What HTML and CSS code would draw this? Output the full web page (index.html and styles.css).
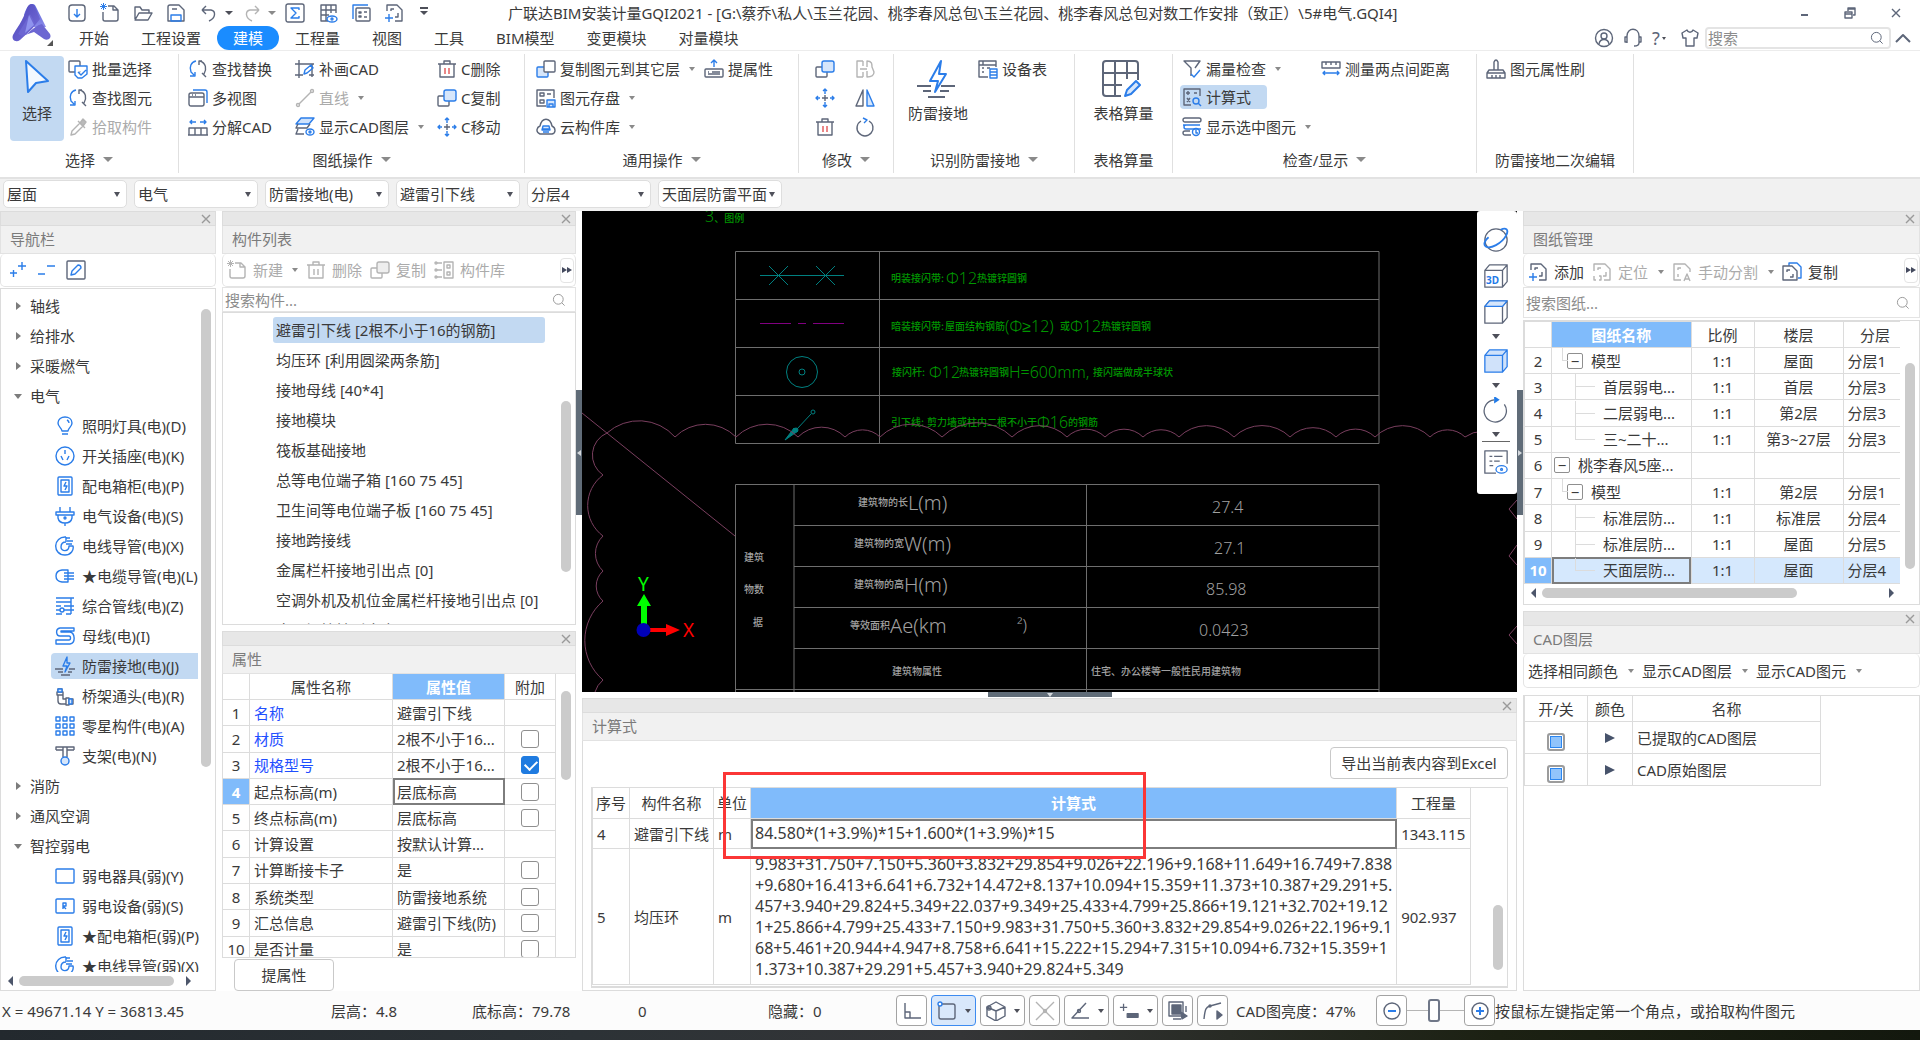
FILE: index.html
```html
<!DOCTYPE html>
<html lang="zh-CN">
<head>
<meta charset="utf-8">
<title>广联达BIM安装计量GQI2021</title>
<link rel="stylesheet" href="styles.css">
</head>
<body>
<svg class="defs" aria-hidden="true">
  <defs>
    <linearGradient id="logoA" x1="0" y1="0" x2="0" y2="1"><stop offset="0" stop-color="#5a62d8"/><stop offset="1" stop-color="#8a8ae8"/></linearGradient>
    <linearGradient id="logoB" x1="0" y1="0" x2="1" y2="1"><stop offset="0" stop-color="#4a44b8"/><stop offset="1" stop-color="#7a72dc"/></linearGradient>
  </defs>
  <symbol id="i-down" viewBox="0 0 20 20"><rect x="2" y="2" width="16" height="16" rx="3"/><path class="b" d="M10 6v8M7 11l3 3 3-3"/></symbol>
  <symbol id="i-new" viewBox="0 0 20 20"><path d="M8 3h6l4 4v9a2 2 0 0 1-2 2H5a2 2 0 0 1-2-2V9M13 3v4h5"/><path class="b" stroke-width="1" d="M1 1l5 5M6 1L1 6M3.500 0v7M0 3.500h7"/></symbol>
  <symbol id="i-open" viewBox="0 0 20 20"><path d="M2 16V4h5l2 3h7v3M2 17l4-7h13l-4 7z"/></symbol>
  <symbol id="i-save" viewBox="0 0 20 20"><path d="M2 18V4a2 2 0 0 1 2-2h9l5 5v11zM6 6h5"/><path class="b" d="M5 18v-6h10v6z"/></symbol>
  <symbol id="i-undo" viewBox="0 0 20 20"><path d="M3 7h9c5 1 5 8-2 11M3 7l4-4M3 7l4 4"/></symbol>
  <symbol id="i-redo" viewBox="0 0 20 20"><path d="M17 7H8c-5 1-5 8 2 11M17 7l-4-4M17 7l-4 4"/></symbol>
  <symbol id="i-sum" viewBox="0 0 20 20"><rect x="1" y="1" width="18" height="18" rx="2"/><path class="b" d="M14 7V5H6l5 5-5 5h8v-2"/></symbol>
  <symbol id="i-grideye" viewBox="0 0 20 20"><path d="M10 18H3V2h15v8M3 7h15M3 12h8M8 2v16M13 2v8"/><ellipse class="b" cx="14" cy="16" rx="5" ry="3"/><circle class="b" cx="14" cy="16" r="1"/></symbol>
  <symbol id="i-list" viewBox="0 0 20 20"><path class="b" d="M2 16V2h15"/><rect x="5" y="5" width="14" height="13" rx="1"/><path d="M8 9h2v1H8zM8 13h2v1H8zM13 9h3M13 14h3"/></symbol>
  <symbol id="i-addpage" viewBox="0 0 20 20"><path d="M3 8V2h10l5 5v11h-7M7 8V6h3M14 10v4h-3"/><path class="b" d="M1 15h8M5 11v8"/></symbol>
  <symbol id="i-cursor" viewBox="0 0 30 36"><path class="b" fill="#f3f8fe" d="M4 3l22 20-12 2-8 9z" stroke-width="2"/></symbol>
  <symbol id="i-batch" viewBox="0 0 20 20"><rect x="1" y="2" width="11" height="11" rx="1"/><path class="b" fill="#fff" d="M7 7h12v8l-5 4h-4l-3-3zM10 13l3 3 5-5"/></symbol>
  <symbol id="i-find" viewBox="0 0 20 20"><path class="b" d="M8 2C3 3 1 8 3 13l3 3M2 17h5v-4"/><path d="M12 2c6 2 7 8 4 13M11 6V2h3M14 14l4 4"/></symbol>
  <symbol id="i-pick" viewBox="0 0 20 20"><path d="M3 18l1-4 8-8 3 3-8 8zM10 4l7 7"/><path d="M12 6l3-4 3 3-3 4z" fill="#bbb"/></symbol>
  <symbol id="i-views" viewBox="0 0 20 20"><path class="b" d="M5 2h12a2 2 0 0 1 2 2v11"/><rect x="1" y="5" width="15" height="13" rx="2"/><path d="M1 9h15M4 7h1M7 7h1"/></symbol>
  <symbol id="i-split" viewBox="0 0 20 20"><path d="M1 18v-7h18v7M0 18h20M7 11v7M13 11v7"/><path class="b" d="M2 5h6M12 5h6M4 3L2 5l2 2M16 3l2 2-2 2"/></symbol>
  <symbol id="i-draw" viewBox="0 0 20 20"><path d="M0 5h19M4 1v18M0 16h8M17 5v13M14 16h5"/><path class="b" d="M9 15l1-4 6-5 2 3-6 5z"/></symbol>
  <symbol id="i-line" viewBox="0 0 20 20"><path d="M4 16L16 4"/><circle cx="3" cy="17" r="1.500"/><circle cx="17" cy="3" r="1.500"/></symbol>
  <symbol id="i-layers" viewBox="0 0 20 20"><path class="b" fill="#cfe2fb" d="M6 1h13l-5 6H1z"/><path d="M3 7l-2 4h11l3-4M3 12l-2 5h8"/><ellipse class="b" cx="15" cy="15" rx="4" ry="3"/><circle class="b" cx="15" cy="15" r="1"/></symbol>
  <symbol id="i-trash" viewBox="0 0 20 20"><path d="M1 5h18M7 5V2h6v3M3 5v13h14V5"/><path class="r" d="M8 9v6M12 9v6"/></symbol>
  <symbol id="i-copy" viewBox="0 0 20 20"><rect x="1" y="8" width="11" height="10" rx="1"/><rect class="b f" x="7" y="2" width="12" height="11" rx="2"/></symbol>
  <symbol id="i-move" viewBox="0 0 20 20"><path class="b" d="M10 1v5M10 14v5M1 10h4M15 10h4M8 3l2-2 2 2M8 17l2 2 2-2M3 8l-2 2 2 2M17 8l2 2-2 2"/><path d="M7 10h6M10 7v6"/></symbol>
  <symbol id="i-copyf" viewBox="0 0 20 20"><rect class="b f" x="1" y="8" width="11" height="10" rx="1"/><rect x="8" y="2" width="11" height="11" rx="1" fill="#fff"/></symbol>
  <symbol id="i-store" viewBox="0 0 20 20"><path d="M10 18H1V2h17v8M4 5h4v3H4zM4 12h4v3H4zM11 6h4"/><path class="b f" d="M11 12h8v7h-8zM13 19v-3h4v3"/></symbol>
  <symbol id="i-cloud" viewBox="0 0 20 20"><path d="M4 17c-5-2-3-7 0-8 2-9 10-9 12 0 4 2 4 7 0 8z"/><path class="b f" d="M6 13l1-4h6l1 4zM7 15h6M6 12h8"/></symbol>
  <symbol id="i-lift" viewBox="0 0 20 20"><rect x="1" y="10" width="18" height="8" rx="1"/><path d="M4 13h1M8 13h8M4 15h12"/><path class="b" d="M10 8V1M7 4l3-3 3 3"/></symbol>
  <symbol id="i-join" viewBox="0 0 20 20"><path d="M8 2H2v16h6M8 2v5M8 13v5M5 10h7M12 8V2c5 0 5 3 5 6l2 5c0 4-3 5-7 5v-6"/></symbol>
  <symbol id="i-mirror" viewBox="0 0 20 20"><path d="M8 2v16H1z"/><path class="b f" d="M12 2v16h7z"/></symbol>
  <symbol id="i-rotate" viewBox="0 0 20 20"><path d="M14 4a8 8 0 1 1-8 0"/><path class="b" d="M8 1l4 2-3 3"/></symbol>
  <symbol id="i-bolt" viewBox="0 0 40 40"><path class="b" d="M25 2L14 22h8l-3 11 11-18h-7z" stroke-width="2"/><path d="M1 27h14M25 27h14M7 32h8M24 32h9M12 38h17" stroke-width="2"/></symbol>
  <symbol id="i-devtab" viewBox="0 0 20 20"><path d="M10 18H1V2h17v6M1 6h17M5 2v4M4 9h2M9 9h3M4 13h2"/><path class="b" d="M12 10h7v9h-7zM12 13h7M12 16h7"/></symbol>
  <symbol id="i-table" viewBox="0 0 40 40"><path d="M20 37H5a3 3 0 0 1-3-3V5a3 3 0 0 1 3-3h29a3 3 0 0 1 3 3v16M2 14h35M2 26h19M14 2v35M26 2v18" stroke-width="2"/><path class="b f" d="M24 37l2-6 9-9 4 4-9 9z" stroke-width="2"/></symbol>
  <symbol id="i-funnel" viewBox="0 0 20 20"><path d="M9 17V9L2 2h16l-5 7"/><path class="b" d="M9 15l3 3 6-7"/></symbol>
  <symbol id="i-formula" viewBox="0 0 20 20"><path d="M9 18H2V2h16v7M4 6h4M6 4v4M12 6h3M5 11l3 4M8 11l-3 4"/><circle class="b" cx="14" cy="14" r="3"/><path class="b" d="M16 16l3 3"/></symbol>
  <symbol id="i-showsel" viewBox="0 0 20 20"><rect x="1" y="1" width="18" height="4" rx="2"/><path class="b" d="M1 8h17M19 12H4a2 2 0 0 1 0-4"/><path d="M9 18H3a2 2 0 0 1 0-4h5"/><circle class="b" cx="14" cy="15" r="3.500"/><path class="b" d="M14 13v3h2"/></symbol>
  <symbol id="i-ruler" viewBox="0 0 20 20"><path d="M1 9V3h18v6zM5 3v3M10 3v3M15 3v3"/><path class="b" d="M2 14h16M4 12l-2 2 2 2M16 12l2 2-2 2"/></symbol>
  <symbol id="i-brush" viewBox="0 0 20 20"><path d="M1 19v-5l2-3h14l2 3v5zM1 14h18M8 11V3q2-4 4 0v8M6 16v3M10 16v3M14 16v3"/></symbol>
  <symbol id="i-user" viewBox="0 0 20 20"><circle cx="10" cy="10" r="8.500"/><circle cx="10" cy="8" r="3"/><path d="M5 16c1-6 9-6 10 0"/></symbol>
  <symbol id="i-head" viewBox="0 0 20 20"><path d="M4 15V8c0-9 12-9 12 0v7M4 9H2v5h2M16 9h2v5h-2M16 15c0 3-3 3-5 3"/></symbol>
  <symbol id="i-shirt" viewBox="0 0 20 20"><path d="M7 2L2 5l1 5h3v8h8v-8h3l1-5-5-3c-1 3-5 3-6 0z"/></symbol>
  <symbol id="i-mag" viewBox="0 0 20 20"><circle cx="9" cy="9" r="7"/><path d="M14 14l4 4"/></symbol>
  <symbol id="i-x" viewBox="0 0 12 12"><path d="M2 2l8 8M10 2l-8 8"/></symbol>
  <symbol id="i-pp" viewBox="0 0 20 20"><path class="b" d="M2 13h7M5.500 10v7M10 6h8M14 2v8"/></symbol>
  <symbol id="i-mm" viewBox="0 0 20 20"><path class="b" d="M1 14h7M10 6h8"/></symbol>
  <symbol id="i-edit" viewBox="0 0 20 20"><rect x="1" y="1" width="18" height="18" rx="1"/><path class="b" d="M5 15l1-4 6-6q3 0 3 3l-6 6z"/></symbol>
  <symbol id="i-lib" viewBox="0 0 20 20"><path d="M10 2h9v16h-9zM13 5h3v3h-3zM13 12h3v3h-3zM3 3h5M3 10h5M3 17h5"/><circle cx="2" cy="3" r="1"/><circle cx="2" cy="10" r="1"/><circle cx="2" cy="17" r="1"/></symbol>
  <symbol id="i-bulb" viewBox="0 0 20 20"><path class="b" d="M7 15c0-3-4-4-4-8 0-8 14-8 14 0 0 4-4 5-4 8zM7 18h6M12 4q2 1 2 3"/></symbol>
  <symbol id="i-socket" viewBox="0 0 20 20"><circle class="b" cx="10" cy="10" r="9"/><path class="b" d="M10 4v4M6 10l2 4M14 10l-2 4"/></symbol>
  <symbol id="i-box" viewBox="0 0 20 20"><rect class="b" x="3" y="1" width="14" height="18" rx="1"/><rect class="b" x="6" y="4" width="8" height="12"/><path class="b" d="M11 6l-2 4h3l-2 4"/></symbol>
  <symbol id="i-plug" viewBox="0 0 20 20"><path class="b" d="M1 6h18v3H1zM5 1v5M15 1v5M3 9v3q1 5 7 5t7-5V9M10 17v3"/><circle class="b" cx="10" cy="12" r="1"/></symbol>
  <symbol id="i-wire" viewBox="0 0 20 20"><path class="b" d="M11 1C-2 0-3 19 10 19c6 0 9-5 8-9h-4c0 6-8 6-8 1 0-3 2-5 5-5M11 1v5M11 2h4M12 5h6M11 8h6"/></symbol>
  <symbol id="i-cable" viewBox="0 0 20 20"><path class="b" d="M13 4H7C-1 5-1 15 7 16h6zM9 7h10M9 10h10M9 13h10"/></symbol>
  <symbol id="i-pipes" viewBox="0 0 20 20"><path class="b" d="M1 2h18M1 6h15M1 14h4M9 14h10M1 18h6M11 18h5M16 2v16M9 10h10M1 10h5"/><circle class="b" cx="7" cy="14" r="2"/></symbol>
  <symbol id="i-bus" viewBox="0 0 20 20"><path class="b" d="M19 2H5c-5 1-4 8 0 8h9c2 0 2 4 0 4H1v4h14c6-1 5-11 0-12H6V5h13z"/></symbol>
  <symbol id="i-sbolt" viewBox="0 0 20 20"><path class="b" d="M12 1L8 10h4l-2 6 5-9h-3z"/><path d="M0 13h8M14 13h6M3 16h5M13 16h4M6 19h9"/></symbol>
  <symbol id="i-tray" viewBox="0 0 20 20"><path d="M2 6h6v3H2zM3 6V3h4v3M3 9v6q0 3 3 3h5V13H8V9M11 12h3v7h-3zM14 13h4v5h-4"/><path class="b f" d="M3 3h4v3H3zM14 13h3v5h-3z"/></symbol>
  <symbol id="i-nine" viewBox="0 0 20 20"><path class="b" d="M1 1h4v4H1zM8 1h4v4H8zM15 1h4v4h-4zM1 8h4v4H1zM8 8h4v4H8zM15 8h4v4h-4zM1 15h4v4H1zM8 15h4v4H8zM15 15h4v4h-4z"/></symbol>
  <symbol id="i-support" viewBox="0 0 20 20"><path d="M1 4V1h18v3M8 1v10M12 1v10M1 4h7M12 4h7"/><circle class="b f" cx="10" cy="15" r="4"/></symbol>
  <symbol id="i-rect" viewBox="0 0 20 20"><rect class="b" x="1" y="3" width="18" height="14" rx="1"/></symbol>
  <symbol id="i-rectr" viewBox="0 0 20 20"><rect class="b" x="1" y="3" width="18" height="14" rx="1"/><path class="b" d="M8 13V7h3v3H8l3 3"/></symbol>
  <symbol id="i-planet" viewBox="0 0 28 28"><circle cx="14" cy="14" r="12"/><path class="b" d="M19 3c6-3 9 0 6 6-5 9-17 15-22 12-3-2-1-7 3-10" stroke-width="2"/></symbol>
  <symbol id="i-cube" viewBox="0 0 28 28"><path d="M2 8h19v18H2zM2 8l5-6h19l-5 6zM26 2v18l-5 6V8z"/></symbol>
  <symbol id="i-rot2" viewBox="0 0 28 28"><path d="M23 8A12 12 0 1 1 12 3"/><path d="M12-1v8l6-4z" fill="#1f7ae8" stroke="none"/></symbol>
  <symbol id="i-panel" viewBox="0 0 28 28"><path d="M14 26H2V2h24v14M7 8h3M12 8h9M7 13h3M12 13h6M7 18h4"/><ellipse class="b" cx="20" cy="22" rx="6" ry="4"/><circle class="b" cx="20" cy="22" r="1"/></symbol>
  <symbol id="i-locate" viewBox="0 0 20 20"><path d="M2 9V2h11l5 5v11h-6M6 8V6h3M14 10v4h-3M2 14v4h2M7 14h2v4H7"/></symbol>
  <symbol id="i-auto" viewBox="0 0 20 20"><path d="M18 10V7l-5-5H2v16h7M6 8V6h3M6 12v3M12 19l3-7 3 7M13 17h4"/></symbol>
  <symbol id="i-dup" viewBox="0 0 20 20"><path class="b" d="M7 4V1h8l4 4v11h-3"/><path d="M1 18V4h9l5 5v9zM5 10V8h3M11 12v3H8"/></symbol>
  <symbol id="i-ortho" viewBox="0 0 20 20"><path d="M3 2v15h16M3 11h5v6"/></symbol>
  <symbol id="i-snap" viewBox="0 0 20 20"><rect x="2" y="3" width="16" height="15" rx="2"/><circle class="b" cx="3" cy="3" r="2" fill="#fff"/></symbol>
  <symbol id="i-iso" viewBox="0 0 20 20"><path d="M10 1l9 5v9l-9 5-9-5V6zM1 6l9 4 9-4M10 10v10"/><circle cx="3" cy="7" r="2"/></symbol>
  <symbol id="i-cross" viewBox="0 0 20 20"><path d="M1 1l18 18M19 1L1 19"/><circle cx="10" cy="10" r="1.500"/></symbol>
  <symbol id="i-angle" viewBox="0 0 20 20"><path d="M16 2L2 17h17"/><circle cx="9" cy="10" r="1.500"/></symbol>
  <symbol id="i-plusbar" viewBox="0 0 22 20"><path d="M1 6h8M5 2v8"/><path d="M9 13h12v4H9z" fill="#5d6679"/></symbol>
  <symbol id="i-stack" viewBox="0 0 20 20"><path d="M1 1h14v14H1zM5 18h8M18 5v6"/><path d="M4 4h9v9H4zM13 11l6 4-5 3z" fill="#5d6679"/></symbol>
  <symbol id="i-poly" viewBox="0 0 20 20"><path d="M1 18C2 8 3 6 7 5l11-3"/><path d="M14 10l5 4-5 4z" fill="#5d6679"/><circle cx="7" cy="5" r="1"/></symbol>
  <symbol id="i-minus" viewBox="0 0 20 20"><circle cx="10" cy="10" r="8"/><path class="b" d="M6 10h8" stroke-width="2"/></symbol>
  <symbol id="i-plus" viewBox="0 0 20 20"><circle cx="10" cy="10" r="8"/><path class="b" d="M6 10h8M10 6v8" stroke-width="2"/></symbol>
</svg>

<header class="top">
  <div class="logo">
    <svg width="46" height="46" viewBox="0 0 46 46"><path d="M14 14C17 3 24 0 26 6l10 20H22z" fill="url(#logoA)"/><path d="M17 7C13 20 6 28 3 34c-2 5 3 8 7 5l12-11 8-10-5-12c-2-4-6-4-8 1z" fill="url(#logoB)"/><path d="M20 13l5 9-9 12q10-10 16-11l8 10c2 4-2 7-6 5l-10-7-12 4-4-2z" fill="#6c66d2"/><path d="M19 14l5 10-9 8z" fill="#8f93ee"/><path d="M43 39v6h-6z" fill="#555"/></svg>
  </div>
  <div class="top-rows">
    <div class="titlebar">
      <div class="qat">
        <button aria-label="导入"><svg class="ic"><use href="#i-down"/></svg></button>
        <button aria-label="新建"><svg class="ic"><use href="#i-new"/></svg></button>
        <button aria-label="打开"><svg class="ic"><use href="#i-open"/></svg></button>
        <button aria-label="保存"><svg class="ic"><use href="#i-save"/></svg></button>
        <button class="wide" aria-label="撤销"><svg class="ic"><use href="#i-undo"/></svg><i class="dd dark"></i></button>
        <button class="wide off" aria-label="恢复"><svg class="ic"><use href="#i-redo"/></svg><i class="dd"></i></button>
        <button aria-label="汇总"><svg class="ic"><use href="#i-sum"/></svg></button>
        <button aria-label="查看工程量"><svg class="ic"><use href="#i-grideye"/></svg></button>
        <button aria-label="列表"><svg class="ic"><use href="#i-list"/></svg></button>
        <button aria-label="添加图纸"><svg class="ic"><use href="#i-addpage"/></svg></button>
        <button class="more" aria-label="更多"><i class="dd dark"></i></button>
      </div>
      <h1>广联达BIM安装计量GQI2021 - [G:\蔡乔\私人\玉兰花园、桃李春风总包\玉兰花园、桃李春风总包对数工作安排（致正）\5#电气.GQI4]</h1>
      <div class="winbtns">
        <button aria-label="最小化"><svg class="ic s12" viewBox="0 0 12 12"><path d="M3 8h7" stroke-width="2"/></svg></button>
        <button aria-label="还原"><svg class="ic s12" viewBox="0 0 12 12"><path d="M1 5h7v6H1zM1 7h7M4 4V1h7v7H9M4 2h7"/></svg></button>
        <button aria-label="关闭"><svg class="ic s12"><use href="#i-x"/></svg></button>
      </div>
    </div>
    <nav class="menu">
      <button>开始</button><button>工程设置</button><button class="on">建模</button><button>工程量</button><button>视图</button><button>工具</button><button>BIM模型</button><button>变更模块</button><button>对量模块</button>
      <div class="menu-right">
        <button aria-label="用户"><svg class="ic"><use href="#i-user"/></svg></button>
        <button aria-label="客服"><svg class="ic"><use href="#i-head"/></svg></button>
        <button class="help" aria-label="帮助">?<i class="dd dark sm"></i></button>
        <button aria-label="皮肤"><svg class="ic"><use href="#i-shirt"/></svg></button>
        <label class="find"><input type="text" placeholder="搜索" aria-label="搜索"><svg class="ic s14"><use href="#i-mag"/></svg></label>
        <button class="fold" aria-label="收起"><svg class="ic s16" viewBox="0 0 16 16"><path d="M1 12l7-7 7 7" stroke-width="2"/></svg></button>
      </div>
    </nav>
  </div>
</header>

<section class="ribbon">
  <div class="group">
    <div class="tools g1">
      <button class="big on"><svg class="ic i36"><use href="#i-cursor"/></svg><span>选择</span></button>
      <div class="col">
        <button class="tool"><svg class="ic"><use href="#i-batch"/></svg>批量选择</button>
        <button class="tool"><svg class="ic"><use href="#i-find"/></svg>查找图元</button>
        <button class="tool off"><svg class="ic"><use href="#i-pick"/></svg>拾取构件</button>
      </div>
    </div>
    <h2>选择<i class="dd big-dd"></i></h2>
  </div>
  <div class="group">
    <div class="tools g2">
      <div class="col">
        <button class="tool"><svg class="ic"><use href="#i-find"/></svg>查找替换</button>
        <button class="tool"><svg class="ic"><use href="#i-views"/></svg>多视图</button>
        <button class="tool"><svg class="ic"><use href="#i-split"/></svg>分解CAD</button>
      </div>
      <div class="col">
        <button class="tool"><svg class="ic"><use href="#i-draw"/></svg>补画CAD</button>
        <button class="tool off"><svg class="ic"><use href="#i-line"/></svg>直线<i class="dd"></i></button>
        <button class="tool"><svg class="ic"><use href="#i-layers"/></svg>显示CAD图层<i class="dd"></i></button>
      </div>
      <div class="col">
        <button class="tool"><svg class="ic"><use href="#i-trash"/></svg>C删除</button>
        <button class="tool"><svg class="ic"><use href="#i-copy"/></svg>C复制</button>
        <button class="tool"><svg class="ic"><use href="#i-move"/></svg>C移动</button>
      </div>
    </div>
    <h2>图纸操作<i class="dd big-dd"></i></h2>
  </div>
  <div class="group">
    <div class="tools g3">
      <div class="col">
        <button class="tool"><svg class="ic"><use href="#i-copyf"/></svg>复制图元到其它层<i class="dd"></i></button>
        <button class="tool"><svg class="ic"><use href="#i-store"/></svg>图元存盘<i class="dd"></i></button>
        <button class="tool"><svg class="ic"><use href="#i-cloud"/></svg>云构件库<i class="dd"></i></button>
      </div>
      <div class="col">
        <button class="tool"><svg class="ic"><use href="#i-lift"/></svg>提属性</button>
      </div>
    </div>
    <h2>通用操作<i class="dd big-dd"></i></h2>
  </div>
  <div class="group">
    <div class="tools g4">
      <div class="col">
        <button class="tool" aria-label="复制"><svg class="ic"><use href="#i-copy"/></svg></button>
        <button class="tool" aria-label="移动"><svg class="ic"><use href="#i-move"/></svg></button>
        <button class="tool" aria-label="删除"><svg class="ic"><use href="#i-trash"/></svg></button>
      </div>
      <div class="col">
        <button class="tool off" aria-label="合并"><svg class="ic"><use href="#i-join"/></svg></button>
        <button class="tool" aria-label="镜像"><svg class="ic"><use href="#i-mirror"/></svg></button>
        <button class="tool" aria-label="旋转"><svg class="ic"><use href="#i-rotate"/></svg></button>
      </div>
    </div>
    <h2>修改<i class="dd big-dd"></i></h2>
  </div>
  <div class="group">
    <div class="tools g5">
      <button class="big"><svg class="ic i40"><use href="#i-bolt"/></svg><span>防雷接地</span></button>
      <div class="col">
        <button class="tool"><svg class="ic"><use href="#i-devtab"/></svg>设备表</button>
      </div>
    </div>
    <h2>识别防雷接地<i class="dd big-dd"></i></h2>
  </div>
  <div class="group">
    <div class="tools g6">
      <button class="big"><svg class="ic i40"><use href="#i-table"/></svg><span>表格算量</span></button>
    </div>
    <h2>表格算量</h2>
  </div>
  <div class="group">
    <div class="tools g7">
      <div class="col">
        <button class="tool"><svg class="ic"><use href="#i-funnel"/></svg>漏量检查<i class="dd"></i></button>
        <button class="tool on"><svg class="ic"><use href="#i-formula"/></svg>计算式</button>
        <button class="tool"><svg class="ic"><use href="#i-showsel"/></svg>显示选中图元<i class="dd"></i></button>
      </div>
      <div class="col">
        <button class="tool"><svg class="ic"><use href="#i-ruler"/></svg>测量两点间距离</button>
      </div>
    </div>
    <h2>检查/显示<i class="dd big-dd"></i></h2>
  </div>
  <div class="group">
    <div class="tools g8">
      <div class="col">
        <button class="tool"><svg class="ic"><use href="#i-brush"/></svg>图元属性刷</button>
      </div>
    </div>
    <h2>防雷接地二次编辑</h2>
  </div>
</section>

<div class="combos">
  <label class="combo"><select aria-label="楼层"><option>屋面</option></select></label>
  <label class="combo"><select aria-label="专业"><option>电气</option></select></label>
  <label class="combo"><select aria-label="构件类型"><option>防雷接地(电)</option></select></label>
  <label class="combo"><select aria-label="构件"><option>避雷引下线</option></select></label>
  <label class="combo"><select aria-label="分层"><option>分层4</option></select></label>
  <label class="combo"><select aria-label="图纸"><option>天面层防雷平面</option></select></label>
</div>

<main class="work">
  <aside class="panel nav">
    <div class="strip"><button aria-label="关闭"><svg class="ic s12"><use href="#i-x"/></svg></button></div>
    <h3>导航栏</h3>
    <div class="bar navbar">
      <button aria-label="展开"><svg class="ic"><use href="#i-pp"/></svg></button>
      <button aria-label="折叠"><svg class="ic"><use href="#i-mm"/></svg></button>
      <button aria-label="编辑"><svg class="ic"><use href="#i-edit"/></svg></button>
    </div>
    <div class="frame tree-frame">
      <div class="tree-row">
        <ul class="tree">
          <li class="root">轴线</li>
          <li class="root">给排水</li>
          <li class="root">采暖燃气</li>
          <li class="root open">电气</li>
          <li><svg class="ic"><use href="#i-bulb"/></svg>照明灯具(电)(D)</li>
          <li><svg class="ic"><use href="#i-socket"/></svg>开关插座(电)(K)</li>
          <li><svg class="ic"><use href="#i-box"/></svg>配电箱柜(电)(P)</li>
          <li><svg class="ic"><use href="#i-plug"/></svg>电气设备(电)(S)</li>
          <li><svg class="ic"><use href="#i-wire"/></svg>电线导管(电)(X)</li>
          <li><svg class="ic"><use href="#i-cable"/></svg>★电缆导管(电)(L)</li>
          <li><svg class="ic"><use href="#i-pipes"/></svg>综合管线(电)(Z)</li>
          <li><svg class="ic"><use href="#i-bus"/></svg>母线(电)(I)</li>
          <li class="sel"><svg class="ic"><use href="#i-sbolt"/></svg>防雷接地(电)(J)</li>
          <li><svg class="ic"><use href="#i-tray"/></svg>桥架通头(电)(R)</li>
          <li><svg class="ic"><use href="#i-nine"/></svg>零星构件(电)(A)</li>
          <li><svg class="ic"><use href="#i-support"/></svg>支架(电)(N)</li>
          <li class="root">消防</li>
          <li class="root">通风空调</li>
          <li class="root open">智控弱电</li>
          <li><svg class="ic"><use href="#i-rect"/></svg>弱电器具(弱)(Y)</li>
          <li><svg class="ic"><use href="#i-rectr"/></svg>弱电设备(弱)(S)</li>
          <li><svg class="ic"><use href="#i-box"/></svg>★配电箱柜(弱)(P)</li>
          <li><svg class="ic"><use href="#i-wire"/></svg>★电线导管(弱)(X)</li>
        </ul>
        <div class="vscroll nav-v"><b></b></div>
      </div>
      <div class="hscroll"><i class="la"></i><b></b><i class="ra"></i></div>
    </div>
  </aside>

  <div class="stack">
    <section class="panel comp">
      <div class="strip"><button aria-label="关闭"><svg class="ic s12"><use href="#i-x"/></svg></button></div>
      <h3>构件列表</h3>
      <div class="bar off compbar">
        <button><svg class="ic"><use href="#i-new"/></svg>新建<i class="dd"></i></button>
        <button><svg class="ic"><use href="#i-trash"/></svg>删除</button>
        <button><svg class="ic"><use href="#i-copy"/></svg>复制</button>
        <button><svg class="ic"><use href="#i-lib"/></svg>构件库</button>
        <button class="chev" aria-label="更多"><i class="rr"></i><i class="rr"></i></button>
      </div>
      <label class="search"><input type="text" placeholder="搜索构件..." aria-label="搜索构件"><svg class="ic s14"><use href="#i-mag"/></svg></label>
      <div class="frame comp-frame">
        <ul class="complist">
          <li class="sel">避雷引下线 [2根不小于16的钢筋]</li>
          <li>均压环 [利用圆梁两条筋]</li>
          <li>接地母线 [40*4]</li>
          <li>接地模块</li>
          <li>筏板基础接地</li>
          <li>总等电位端子箱 [160 75 45]</li>
          <li>卫生间等电位端子板 [160 75 45]</li>
          <li>接地跨接线</li>
          <li>金属栏杆接地引出点 [0]</li>
          <li>空调外机及机位金属栏杆接地引出点 [0]</li>
          <li>金属门接地引出点</li>
        </ul>
        <div class="vscroll comp-v"><b></b></div>
      </div>
    </section>

    <section class="panel props">
      <div class="strip"><button aria-label="关闭"><svg class="ic s12"><use href="#i-x"/></svg></button></div>
      <h3>属性</h3>
      <div class="frame props-frame">
        <table class="grid ptable">
          <colgroup><col class="c27"><col class="c143"><col class="c112"><col class="c51"></colgroup>
          <thead><tr><th></th><th>属性名称</th><th class="hot">属性值</th><th>附加</th></tr></thead>
          <tbody>
            <tr><td>1</td><td class="link">名称</td><td>避雷引下线</td><td></td></tr>
            <tr><td>2</td><td class="link">材质</td><td>2根不小于16...</td><td><input type="checkbox" aria-label="材质"></td></tr>
            <tr><td>3</td><td class="link">规格型号</td><td>2根不小于16...</td><td><input type="checkbox" checked aria-label="规格型号"></td></tr>
            <tr><td class="hot">4</td><td>起点标高(m)</td><td class="cur">层底标高</td><td><input type="checkbox" aria-label="起点标高"></td></tr>
            <tr><td>5</td><td>终点标高(m)</td><td>层底标高</td><td><input type="checkbox" aria-label="终点标高"></td></tr>
            <tr><td>6</td><td>计算设置</td><td>按默认计算...</td><td></td></tr>
            <tr><td>7</td><td>计算断接卡子</td><td>是</td><td><input type="checkbox" aria-label="计算断接卡子"></td></tr>
            <tr><td>8</td><td>系统类型</td><td>防雷接地系统</td><td><input type="checkbox" aria-label="系统类型"></td></tr>
            <tr><td>9</td><td>汇总信息</td><td>避雷引下线(防)</td><td><input type="checkbox" aria-label="汇总信息"></td></tr>
            <tr><td>10</td><td>是否计量</td><td>是</td><td><input type="checkbox" aria-label="是否计量"></td></tr>
          </tbody>
        </table>
        <div class="vscroll props-v"><b></b></div>
      </div>
      <button class="btn lift">提属性</button>
    </section>
  </div>

  <div class="center">
    <section class="canvas">
      <svg class="cad">
        <g transform="translate(-582 -211)">
          <g class="cadline">
            <path d="M735.500 251.500H1379V443.500H735.500zM735.500 299.500H1379M735.500 347.500H1379M735.500 395.500H1379M879.500 251.500V443.500"/>
            <path d="M735.500 692V484.500H1379V692M735.500 689.500H1379M794 484.500V692M1086.500 484.500V692M794 525.500H1379M794 566.500H1379M794 607.500H1379M794 648.500H1379"/>
          </g>
          <g class="teal">
            <path d="M760 275.500h84M769 266l19 19M788 266l-19 19M816 266l19 19M835 266l-19 19"/>
            <circle cx="802" cy="372" r="15.500"/><circle cx="802" cy="372" r="3"/><circle cx="813" cy="412" r="2"/>
            <path d="M811 414l-14 15"/><path d="M785 440l9-12 4 3z" fill="#008080"/><circle cx="796" cy="430" r="2" fill="#008080"/>
          </g>
          <path class="purple" d="M760 323.500h31M798 323.500h8M813 323.500h31"/>
          <g class="green">
            <text x="705" y="222"><tspan class="n">3</tspan>、图例</text>
            <text x="891" y="282">明装接闪带:</text><text x="946" y="284" class="n">Φ12</text><text x="977" y="282">热镀锌圆钢</text>
            <text x="891" y="330">暗装接闪带:</text><text x="945" y="330">屋面结构钢筋</text><text x="1005" y="332" class="n">(Φ≥12)</text><text x="1060" y="330">或</text><text x="1070" y="332" class="n">Φ12</text><text x="1101" y="330">热镀锌圆钢</text>
            <text x="892" y="376">接闪杆:</text><text x="929" y="378" class="n">Φ12</text><text x="959" y="376">热镀锌圆钢</text><text x="1009" y="378" class="n">H=600mm,</text><text x="1093" y="376">接闪端做成半球状</text>
            <text x="891" y="426">引下线:</text><text x="927" y="426">剪力墙或柱内二根不小于</text><text x="1037" y="428" class="n">Φ16</text><text x="1068" y="426">的钢筋</text>
          </g>
          <g class="gray">
            <text x="858" y="506">建筑物的长</text><text x="908" y="510" class="w">L(m)</text>
            <text x="854" y="547">建筑物的宽</text><text x="904" y="551" class="w">W(m)</text>
            <text x="854" y="588">建筑物的高</text><text x="904" y="592" class="w">H(m)</text>
            <text x="850" y="629">等效面积</text><text x="890" y="633" class="w">Ae(km</text><text x="1017" y="631" class="n">²)</text>
            <text x="892" y="675">建筑物属性</text>
            <text x="744" y="561">建筑</text><text x="744" y="593">物数</text><text x="753" y="626">据</text>
            <text x="1212" y="513" class="n">27.4</text><text x="1214" y="554" class="n">27.1</text><text x="1206" y="595" class="n">85.98</text><text x="1199" y="636" class="n">0.0423</text>
            <text x="1091" y="675">住宅、办公楼等一般性民用建筑物</text>
          </g>
          <path class="cloud" d="M582 413L735 536M607 433A48 48 0 0 1 675 437A43 43 0 0 1 736 437A44 44 0 0 1 798 437A33 33 0 0 1 845 437A25 25 0 0 1 880 437A44 44 0 0 1 942 437A50 50 0 0 1 1012 437A39 39 0 0 1 1067 437A27 27 0 0 1 1105 437A27 27 0 0 1 1143 437A26 26 0 0 1 1179 437A39 39 0 0 1 1234 437A40 40 0 0 1 1290 437A33 33 0 0 1 1336 437A28 28 0 0 1 1375 437A39 39 0 0 1 1430 437A25 25 0 0 1 1465 437A30 30 0 0 1 1500 437M607 433A24 24 0 0 0 603 475A38 38 0 0 0 603 536A24 24 0 0 0 603 571A20 20 0 0 0 603 601A52 52 0 0 0 603 680Q597 685 595 692M1517 500l-8 9 8 10M1517 545l-8 11 8 9M1517 626l-8 9 8 9"/>
          <path d="M641 627V606h-4l7-12 7 12h-4v21z" fill="#0f0"/><path d="M647 628h19v-4l14 6-14 6v-4h-19z" fill="#f00"/><circle cx="643.500" cy="630" r="7" fill="#0000b8"/>
          <text x="638" y="591" class="axis-y">Y</text><text x="683" y="637" class="axis-x">X</text>
        </g>
      </svg>
      <div class="viewbar">
        <button aria-label="动态观察"><svg class="ic i26"><use href="#i-planet"/></svg></button>
        <button class="three" aria-label="三维"><svg class="ic i26"><use href="#i-cube"/></svg><span>3D</span></button>
        <button aria-label="俯视"><svg class="ic i26" viewBox="0 0 28 28"><use href="#i-cube"/><path class="b f" d="M2 8l5-6h19l-5 6z"/></svg></button>
        <i class="dd dark big-dd"></i>
        <button aria-label="实体"><svg class="ic i26 solid"><use href="#i-cube"/></svg></button>
        <i class="dd dark big-dd"></i>
        <button aria-label="旋转视图"><svg class="ic i26"><use href="#i-rot2"/></svg></button>
        <i class="dd dark big-dd"></i>
        <hr>
        <button aria-label="显示设置"><svg class="ic i26"><use href="#i-panel"/></svg></button>
      </div>
      <span class="handle hl"></span><span class="handle hr"></span><span class="handle hb"></span>
    </section>

    <section class="panel calc">
      <div class="strip"><button aria-label="关闭"><svg class="ic s12"><use href="#i-x"/></svg></button></div>
      <h3>计算式</h3>
      <div class="frame calc-frame">
        <div class="calc-act"><button class="btn">导出当前表内容到Excel</button></div>
        <div class="calc-grid">
          <table class="grid ctable">
            <colgroup><col class="c39"><col class="c84"><col class="c39"><col><col class="c74"></colgroup>
            <thead><tr><th>序号</th><th>构件名称</th><th>单位</th><th class="hot">计算式</th><th>工程量</th></tr></thead>
            <tbody>
              <tr class="r4"><td>4</td><td>避雷引下线</td><td>m</td><td class="cur num">84.580*(1+3.9%)*15+1.600*(1+3.9%)*15</td><td>1343.115</td></tr>
              <tr class="r5"><td>5</td><td>均压环</td><td>m</td><td class="num">9.983+31.750+7.150+5.360+3.832+29.854+9.026+22.196+9.168+11.649+16.749+7.838<br>+9.680+16.413+6.641+6.732+14.472+8.137+10.094+15.359+11.373+10.387+29.291+5.<br>457+3.940+29.824+5.349+22.037+9.349+25.433+4.799+25.866+19.121+32.702+19.12<br>1+25.866+4.799+25.433+7.150+9.983+31.750+5.360+3.832+29.854+9.026+22.196+9.1<br>68+5.461+20.944+4.947+8.758+6.641+15.222+15.294+7.315+10.094+6.732+15.359+1<br>1.373+10.387+29.291+5.457+3.940+29.824+5.349</td><td>902.937</td></tr>
            </tbody>
          </table>
          <div class="vscroll calc-v"><b></b></div>
          <span class="mark"></span>
        </div>
      </div>
    </section>
  </div>

  <div class="stack right">
    <section class="panel sheets">
      <div class="strip"><button aria-label="关闭"><svg class="ic s12"><use href="#i-x"/></svg></button></div>
      <h3>图纸管理</h3>
      <div class="bar sheetbar">
        <button><svg class="ic"><use href="#i-addpage"/></svg>添加</button>
        <button class="off"><svg class="ic"><use href="#i-locate"/></svg>定位<i class="dd"></i></button>
        <button class="off"><svg class="ic"><use href="#i-auto"/></svg>手动分割<i class="dd"></i></button>
        <button><svg class="ic"><use href="#i-dup"/></svg>复制</button>
        <button class="chev" aria-label="更多"><i class="rr"></i><i class="rr"></i></button>
      </div>
      <label class="search tall"><input type="text" placeholder="搜索图纸..." aria-label="搜索图纸"><svg class="ic s14"><use href="#i-mag"/></svg></label>
      <div class="frame sheet-frame">
        <div class="sheet-row">
          <table class="grid stable">
            <colgroup><col class="c27"><col><col class="c63"><col class="c89"><col class="c57"></colgroup>
            <thead><tr><th></th><th class="hot">图纸名称</th><th>比例</th><th>楼层</th><th class="rt">分层</th></tr></thead>
            <tbody>
              <tr><td>2</td><td><div class="tn l1"><button class="pm" aria-label="折叠">−</button>模型</div></td><td>1:1</td><td>屋面</td><td>分层1</td></tr>
              <tr><td>3</td><td><div class="tn l2">首层弱电...</div></td><td>1:1</td><td>首层</td><td>分层3</td></tr>
              <tr><td>4</td><td><div class="tn l2">二层弱电...</div></td><td>1:1</td><td>第2层</td><td>分层3</td></tr>
              <tr><td>5</td><td><div class="tn l2 end">三~二十...</div></td><td>1:1</td><td>第3~27层</td><td>分层3</td></tr>
              <tr><td>6</td><td><div class="tn l0"><button class="pm" aria-label="折叠">−</button>桃李春风5座...</div></td><td></td><td></td><td></td></tr>
              <tr><td>7</td><td><div class="tn l1"><button class="pm" aria-label="折叠">−</button>模型</div></td><td>1:1</td><td>第2层</td><td>分层1</td></tr>
              <tr><td>8</td><td><div class="tn l2">标准层防...</div></td><td>1:1</td><td>标准层</td><td>分层4</td></tr>
              <tr><td>9</td><td><div class="tn l2">标准层防...</div></td><td>1:1</td><td>屋面</td><td>分层5</td></tr>
              <tr class="picked"><td class="hot">10</td><td class="cur"><div class="tn l2 end">天面层防...</div></td><td>1:1</td><td>屋面</td><td>分层4</td></tr>
            </tbody>
          </table>
          <div class="vscroll sheet-v"><b></b></div>
        </div>
        <div class="hscroll sheet-h"><i class="la"></i><b></b><i class="ra"></i></div>
      </div>
    </section>

    <section class="panel layers">
      <div class="strip"><button aria-label="关闭"><svg class="ic s12"><use href="#i-x"/></svg></button></div>
      <h3>CAD图层</h3>
      <div class="bar layerbar">
        <button>选择相同颜色<i class="dd"></i></button>
        <button>显示CAD图层<i class="dd"></i></button>
        <button>显示CAD图元<i class="dd"></i></button>
      </div>
      <div class="frame layer-frame">
        <table class="grid ltable">
          <colgroup><col class="c63"><col class="c45"><col></colgroup>
          <thead><tr><th>开/关</th><th>颜色</th><th>名称</th></tr></thead>
          <tbody>
            <tr><td><input type="checkbox" class="fill" aria-label="已提取的CAD图层"></td><td><i class="play"></i></td><td>已提取的CAD图层</td></tr>
            <tr><td><input type="checkbox" class="fill" aria-label="CAD原始图层"></td><td><i class="play"></i></td><td>CAD原始图层</td></tr>
          </tbody>
        </table>
      </div>
    </section>
  </div>
</main>

<footer class="status">
  <span class="s-xy">X = 49671.14 Y = 36813.45</span>
  <span class="s-fh">层高：4.8</span>
  <span class="s-bh">底标高：79.78</span>
  <span class="s-n">0</span>
  <span class="s-hid">隐藏：0</span>
  <div class="modes">
    <button aria-label="正交"><svg class="ic"><use href="#i-ortho"/></svg></button>
    <button class="w on" aria-label="捕捉"><svg class="ic"><use href="#i-snap"/></svg><i class="dd dark"></i></button>
    <button class="w" aria-label="三维捕捉"><svg class="ic"><use href="#i-iso"/></svg><i class="dd dark"></i></button>
    <button class="off" aria-label="交点"><svg class="ic"><use href="#i-cross"/></svg></button>
    <button class="w" aria-label="角度"><svg class="ic"><use href="#i-angle"/></svg><i class="dd dark"></i></button>
    <button class="w" aria-label="偏移"><svg class="ic"><use href="#i-plusbar"/></svg><i class="dd dark"></i></button>
    <button aria-label="叠放"><svg class="ic"><use href="#i-stack"/></svg></button>
    <button aria-label="折线"><svg class="ic"><use href="#i-poly"/></svg></button>
  </div>
  <label class="bright" for="bright">CAD图亮度：47%</label>
  <div class="zoomer">
    <button aria-label="减小"><svg class="ic"><use href="#i-minus"/></svg></button>
    <input id="bright" type="range" min="0" max="100" value="47">
    <button aria-label="增大"><svg class="ic"><use href="#i-plus"/></svg></button>
  </div>
  <span>按鼠标左键指定第一个角点，或拾取构件图元</span>
</footer>
<div class="taskbar"></div>
</body>
</html>
```
FILE: styles.css
```css
* { box-sizing: border-box; }
:root { --line: #dcdcdc; --ink: #3a3a3a; --steel: #5d6679; --blue: #2b7de9; --hot: #80bbfb; --pick: #c2d9f2; }
body {
  margin: 0;
  height: 100vh;
  display: flex;
  flex-direction: column;
  overflow: hidden;
  background: #fff;
  color: var(--ink);
  font: 15px/20px "Noto Sans", "Noto Sans CJK SC", sans-serif;
}
button, input, select { font: inherit; color: inherit; }
button { background: none; border: 0; padding: 0; display: flex; align-items: center; white-space: nowrap; }
h1, h2, h3 { margin: 0; font-size: 15px; font-weight: 400; }
ul { list-style: none; margin: 0; padding: 0; }
.defs { position: absolute; width: 0; height: 0; }

/* icons */
.ic { width: 20px; height: 20px; flex: none; fill: none; stroke: var(--steel); stroke-width: 1.4; stroke-linejoin: round; overflow: visible; }
.b { stroke: var(--b, var(--blue)); }
.r { stroke: var(--r, #e25555); }
.f { fill: var(--f, #d6e6fb); }
.s12 { width: 12px; height: 12px; }
.s14 { width: 14px; height: 14px; }
.s16 { width: 16px; height: 16px; }
.i26 { width: 26px; height: 26px; }
.i36 { width: 30px; height: 36px; }
.i40 { width: 40px; height: 40px; }
.off { color: #ababab; --steel: #b4b4b4; --b: #b4b4b4; --r: #b4b4b4; --f: #eee; }
.dd { display: inline-block; flex: none; border: 3px solid transparent; border-top: 4px solid #8a8a8a; border-bottom: 0; margin-left: 9px; }
.dd.dark { border-top-color: #4d4f59; }
.dd.big-dd { border-width: 5px 5px 0; }
.dd.sm { border-width: 3px 2px 0; margin-left: 2px; }

/* header */
.top { display: grid; grid-template-columns: 63px 1fr; height: 51px; border-bottom: 1px solid #ececec; }
.logo { padding: 1px 0 0 10px; }
.top-rows { min-width: 0; }
.titlebar { display: flex; height: 26px; align-items: center; white-space: nowrap; }
.qat { display: flex; width: 445px; padding-left: 4px; flex: none; }
.qat button { width: 33px; }
.qat .wide { width: 43px; }
.qat .wide .dd { margin-left: 6px; border-width: 4px 4px 0; }
.qat .more { width: 24px; padding-left: 3px; }
.qat .more .dd { margin: 0; border-width: 4px 4px 0; }
.qat .more::before { content: ""; width: 8px; height: 2px; background: #4d4f59; margin: -10px -8px 0 0; }
.winbtns { display: flex; gap: 34px; padding-right: 18px; margin-left: auto; }
.menu { display: flex; height: 24px; }
.menu > button { padding: 0 16px; height: 24px; border-radius: 12px; }
.menu > .on { background: #1a8cff; color: #fff; }
.menu-right { margin-left: auto; display: flex; align-items: center; gap: 9px; padding-right: 9px; }
.help { width: 19px; font-size: 18px; color: var(--steel); }
.find { display: flex; align-items: center; width: 186px; height: 22px; border: 2px solid #e4e4e4; border-radius: 4px; padding: 0 5px 0 1px; margin-left: -4px; }
.find input { flex: 1; min-width: 0; border: 0; padding: 0; background: none; height: 18px; }
input::placeholder { color: #8c8c8c; opacity: 1; }
.fold { margin-left: -5px; }

/* ribbon */
.ribbon { display: grid; grid-template-columns: 179px 346px 274px 95px 181px 98px 304px 157px 1fr; height: 128px; border-bottom: 2px solid #e2e2e2; padding-top: 3px; }
.group { display: flex; flex-direction: column; border-right: 1px solid #e0e0e0; margin-bottom: 4px; }
.tools { display: flex; height: 88px; }
.group h2 { display: flex; flex: 1; align-items: center; justify-content: center; padding-top: 4px; }
.group h2 .dd { margin-left: 8px; }
.group:last-child h2, .g6 + h2 { padding-right: 0; }
.col { display: flex; flex-direction: column; align-items: flex-start; }
.tool { gap: 4px; height: 29px; }
.tool .dd { margin-left: 5px; }
.big { flex-direction: column; justify-content: space-between; margin: 2px 0 1px; padding: 3px 0 18px; height: 85px; }
.big.on { width: 54px; background: var(--pick); border-radius: 4px; padding-top: 2px; }
.g1 { padding-left: 10px; gap: 4px; }
.g2 { padding-left: 9px; }
.g2 .col:nth-child(1) { width: 107px; }
.g2 .col:nth-child(2) { width: 142px; }
.g3 { padding-left: 11px; }
.g3 .col:nth-child(1) { width: 168px; }
.g4 { padding-left: 16px; gap: 20px; }
.g5 { padding-left: 14px; gap: 10px; }
.g5 .big { width: 60px; }
.g6 { justify-content: center; }
.g6 .ic, .g5 .big .ic { margin-right: 4px; }
.g7 { padding-left: 7px; }
.g7 .col:nth-child(1) { width: 139px; }
.g7 .tool { padding: 0 2px; }
.g7 .tool.on { background: var(--pick); border-radius: 4px; height: 24px; margin: 2px 0 3px; width: 87px; }
.g8 { padding-left: 9px; }

/* combo strip */
.combos { display: flex; gap: 7px; padding: 1px 3px 3px; height: 32px; background: #f1f1f1; }
.combo { position: relative; width: 124px; }
.combo select { appearance: none; width: 100%; height: 28px; border: 1px solid #dedede; border-radius: 5px; background: #fff; padding: 0 0 0 3px; }
.combo::after { content: ""; position: absolute; right: 7px; top: 12px; border: 3px solid transparent; border-top: 5px solid #50525c; border-bottom: 0; }

/* work area */
.work { flex: 1; min-height: 0; display: grid; grid-template-columns: 216px 354px minmax(0, 1fr) 397px; gap: 6px; }
.panel { display: flex; flex-direction: column; min-height: 0; }
.stack, .center { display: flex; flex-direction: column; gap: 6px; min-height: 0; }
.strip { height: 15px; flex: none; background: #e7e7e7; border: 1px solid var(--line); display: flex; justify-content: flex-end; align-items: center; padding-right: 3px; --steel: #9a9a9a; }
.panel h3 { height: 28px; flex: none; background: #f1f1f1; border: 1px solid #e2e2e2; border-top: 0; padding-left: 9px; line-height: 26px; color: #7b7b7b; }
.bar { display: flex; align-items: center; height: 33px; flex: none; border: 1px solid #e4e4e4; border-top: 0; border-radius: 5px; padding-left: 4px; }
.bar button { gap: 6px; }
.bar .dd { margin-left: 3px; }
.navbar { gap: 9px; padding-left: 7px; }
.compbar { gap: 8px; }
.bar .chev { margin-left: auto; gap: 0; width: 14px; height: 25px; border: 1px solid #e4e4e4; border-radius: 4px; justify-content: center; margin-right: 1px; }
.rr { border: 3px solid transparent; border-left: 5px solid #444a5e; border-right: 0; }
.frame { border: 1px solid var(--line); background: #fff; }
.search { display: flex; align-items: center; height: 25px; flex: none; border: 1px solid #e4e4e4; padding: 0 9px 0 2px; --steel: #9a9a9a; }
.search.tall { height: 31px; margin-bottom: 2px; }
.search input { flex: 1; min-width: 0; border: 0; padding: 0; }
.sel { background: var(--pick); }

.vscroll { width: 18px; flex: none; display: flex; justify-content: center; }
.vscroll b { width: 10px; border-radius: 5px; background: #cbcbcb; }
.hscroll { display: flex; align-items: center; height: 18px; gap: 6px; padding: 0 7px; flex: none; }
.hscroll b { height: 10px; width: 155px; border-radius: 5px; background: #cbcbcb; }
.la, .ra { border: 5px solid transparent; border-right: 5px solid #4d566b; border-left: 0; }
.ra { border-right: 0; border-left: 5px solid #4d566b; margin-left: 6px; }

/* navigation tree */
.tree-frame { flex: 1; min-height: 0; display: flex; flex-direction: column; margin-top: 1px; }
.tree-row { flex: 1; min-height: 0; display: flex; overflow: hidden; }
.tree { flex: 1; min-width: 0; overflow: hidden; padding-top: 4px; }
.tree li { display: flex; align-items: center; gap: 7px; height: 26px; margin: 0 3px 4px 50px; padding-left: 4px; white-space: nowrap; border-radius: 4px 0 0 4px; }
.tree .root { margin-left: 0; padding-left: 15px; gap: 9px; }
.root::before { content: ""; border: 4px solid transparent; border-left: 5px solid #7c7c7c; border-right: 0; }
.tree .root.open { padding-left: 13px; gap: 8px; }
.root.open::before { border: 4px solid transparent; border-top: 5px solid #7c7c7c; border-bottom: 0; }
.nav-v { width: 14px; padding: 20px 4px 0 0; }
.nav-v b { height: 458px; }

/* component list */
.comp { flex: 0 0 414px; }
.comp-frame { flex: 1; min-height: 0; display: flex; overflow: hidden; }
.complist { flex: 1; padding: 4px 0 0 50px; }
.complist li { height: 26px; margin-bottom: 4px; padding-left: 3px; line-height: 26px; width: 272px; border-radius: 3px; white-space: nowrap; }
.comp-v { padding-top: 88px; }
.comp-v b { height: 171px; }

/* grids */
.grid { border-collapse: collapse; table-layout: fixed; }
.grid th, .grid td { border: 1px solid var(--line); padding: 0 4px; font-weight: 400; text-align: left; white-space: nowrap; overflow: hidden; line-height: 20px; }
.grid th { text-align: center; }
.grid .hot { background: var(--hot); color: #fff; font-weight: 700; }
.grid .cur { outline: 2px solid #7d7d7d; outline-offset: -2px; }
.c27 { width: 27px; } .c39 { width: 39px; } .c45 { width: 45px; } .c51 { width: 51px; } .c57 { width: 57px; }
.c63 { width: 63px; } .c74 { width: 74px; } .c84 { width: 84px; } .c89 { width: 89px; } .c112 { width: 112px; } .c143 { width: 143px; }
.link { color: #1f4fff; }
input[type=checkbox] { appearance: none; display: block; width: 18px; height: 18px; margin: 0 auto; border: 1px solid #8f8f8f; border-radius: 3px; background: #fff; }
input[type=checkbox]:checked { background: #1f7be0; border-color: #1f7be0; }
input[type=checkbox]:checked::before { content: ""; display: block; width: 6px; height: 10px; margin: 1px 0 0 5px; border: solid #fff; border-width: 0 2px 2px 0; transform: rotate(45deg); }
input.fill { position: relative; top: 4px; border: 2px solid #9c9c9c; background: #91c4fb; box-shadow: inset 0 0 0 1px #fff, inset 0 0 0 2px #2b86f0; }

.props { flex: 1; }
.props-frame { display: flex; height: 284px; overflow: hidden; border-top: 0; flex: none; }
.ptable { width: 333px; height: 290px; margin: -1px 0 0 -1px; }
.ptable tr, .stable tr { height: 26px; }
.ptable td:first-child, .stable td:first-child { text-align: center; padding: 0; }
.props-v { width: 20px; padding-top: 17px; }
.props-v b { height: 89px; }
.btn { justify-content: center; height: 32px; border: 1px solid #c9c9c9; border-radius: 4px; background: #fff; }
.lift { width: 100px; margin: 1px 0 0 12px; }

/* drawing canvas */
.canvas { position: relative; height: 481px; flex: none; background: #000; }
.cad { display: block; width: 100%; height: 100%; overflow: hidden; }
.cadline { fill: none; stroke: #6e6e6e; }
.teal { fill: none; stroke: #008080; }
.purple { stroke: #800080; }
.cloud { fill: none; stroke: #7a3f5f; }
.cad text { font: 500 10px "Noto Sans CJK SC", sans-serif; }
.green text { fill: #009600; }
.gray text { fill: #a0a0a0; }
.cad text.n, .cad tspan.n { font: 300 16px "Noto Sans", sans-serif; }
.cad text.w { font: 300 20px "Noto Sans", sans-serif; }
.cad .axis-y, .cad .axis-x { font: 19px "Noto Sans", sans-serif; }
.axis-y { fill: #0f0; }
.axis-x { fill: #f00; }
.viewbar { position: absolute; right: 0; top: 0; width: 40px; height: 283px; background: #fff; border-radius: 3px; display: flex; flex-direction: column; align-items: center; padding: 16px 2px 0 0; gap: 10px; }
.viewbar .dd { margin: -1px 0; border-width: 5px 4px 0; }
.viewbar hr { width: 28px; margin: -5px 0 -3px; border: 0; border-top: 1px solid #666; }
.viewbar button { position: relative; }
.three span { position: absolute; left: 3px; top: 9px; font-size: 10px; line-height: 16px; font-weight: 700; color: #1f7ae8; }
.solid { stroke: var(--blue); fill: #d0e2fa; }
.handle { position: absolute; background: #606c78; display: flex; align-items: center; justify-content: center; }
.handle::before { content: ""; border: 3px solid transparent; }
.hl, .hr { top: 179px; width: 6px; height: 125px; }
.hl { left: -6px; }
.hr { right: -6px; }
.hl::before { border-right: 4px solid #d5d9dd; border-left: 0; }
.hr::before { border-left: 4px solid #d5d9dd; border-right: 0; }
.hb { left: 406px; bottom: -5px; width: 124px; height: 5px; }
.hb::before { border-top: 4px solid #d5d9dd; border-bottom: 0; }

/* formula panel */
.calc { flex: 1; }
.calc-frame { flex: 1; display: flex; flex-direction: column; border-top: 0; padding: 6px 8px 2px; }
.calc-act { display: flex; justify-content: flex-end; padding-bottom: 8px; }
.calc-act .btn { width: 178px; }
.calc-grid { position: relative; flex: 1; display: flex; justify-content: space-between; border: 1px solid var(--line); border-bottom-width: 2px; }
.ctable { flex: 1; min-width: 0; margin: -1px 0 0; height: 198px; }
.ctable thead { height: 31px; }
.ctable th { padding: 0; }
.ctable .r4 { height: 30px; }
.ctable .num { font-size: 16px; line-height: 21px; }
.calc-v { width: 36px; padding: 117px 0 0 18px; }
.calc-v b { height: 65px; }
.mark { position: absolute; left: 131px; top: -16px; width: 423px; height: 87px; border: 3px solid #fb3636; }

/* sheets */
.sheets { flex: 0 0 394px; }
.sheetbar { gap: 8px; padding-top: 3px; }
.sheetbar .dd { margin-left: 4px; }
.sheetbar button:last-of-type { margin-top: -3px; }
.sheet-frame { flex: 1; }
.sheet-row { display: flex; height: 263px; }
.stable { flex: 1; min-width: 0; height: 263px; margin: 0; }
.stable td:nth-child(3), .stable td:nth-child(4) { text-align: center; padding: 0; }
.stable td:nth-child(2) { padding: 0; }
.stable th:last-child, .stable td:last-child { border-right: 0; }
.stable th.rt { text-align: right; padding-right: 10px; }
.picked { background: #d5e8fd; }
.tn { position: relative; display: flex; align-items: center; height: 25px; }
.l0 { padding-left: 2px; gap: 8px; }
.l1 { padding-left: 15px; gap: 8px; }
.l2 { padding-left: 51px; }
.l2::before { content: ""; position: absolute; left: 23px; top: 12px; width: 20px; border-top: 1px solid var(--line); }
.l2::after { content: ""; position: absolute; left: 23px; top: 0; height: 100%; border-left: 1px solid var(--line); }
.l2.end::after { height: 12px; }
.l1::before { content: ""; position: absolute; left: 10px; top: 0; width: 5px; height: 12px; border: solid var(--line); border-width: 0 0 1px 1px; }
.pm { width: 16px; height: 16px; border: 1px solid #8f8f8f; border-radius: 2px; justify-content: center; line-height: 14px; background: #fff; }
.sheet-v { width: 19px; padding-top: 42px; }
.sheet-v b { height: 206px; }
.sheet-h b { width: 255px; }
.sheet-h .ra { margin-left: 86px; }

.layers { flex: 1; }
.layerbar { gap: 8px; height: 34px; }
.layerbar button { gap: 7px; }
.layer-frame { flex: 1; margin-top: 7px; }
.ltable { width: 297px; margin: -1px 0 0 0; }
.ltable thead { height: 26px; }
.ltable tbody tr { height: 32px; }
.play { display: block; width: 0; margin: 0 auto; border: 5px solid transparent; border-left: 10px solid #47536b; border-right: 0; }

/* status */
.status { display: flex; align-items: center; height: 39px; flex: none; background: #fcfcfc; padding-left: 2px; white-space: nowrap; }
.s-xy { width: 329px; }
.s-fh { width: 141px; }
.s-bh { width: 166px; }
.s-n { width: 130px; }
.s-hid { width: 128px; }
.modes { display: flex; gap: 4px; }
.modes button, .zoomer button { width: 31px; height: 31px; border: 1px solid #a3a3a3; border-radius: 4px; justify-content: center; background: #fff; }
.modes .w { width: 45px; }
.modes .w .dd { margin-left: 8px; }
.modes .on { border-color: #3d8bf0; background: #d9e8fb; }
.bright { width: 148px; padding-left: 8px; }
.zoomer { display: flex; align-items: center; }
.zoomer input { appearance: none; width: 57px; height: 24px; margin: 0; background: linear-gradient(#b5b5b5, #b5b5b5) center / 100% 1px no-repeat; }
.zoomer input::-webkit-slider-thumb { appearance: none; width: 12px; height: 23px; border: 2px solid #6f7788; border-radius: 3px; background: #fff; }
.taskbar { height: 10px; flex: none; background: linear-gradient(90deg, #23292e 0, #2c3236 30%, #343537 50%, #1c2113 78%, #13180e 100%); }
```
